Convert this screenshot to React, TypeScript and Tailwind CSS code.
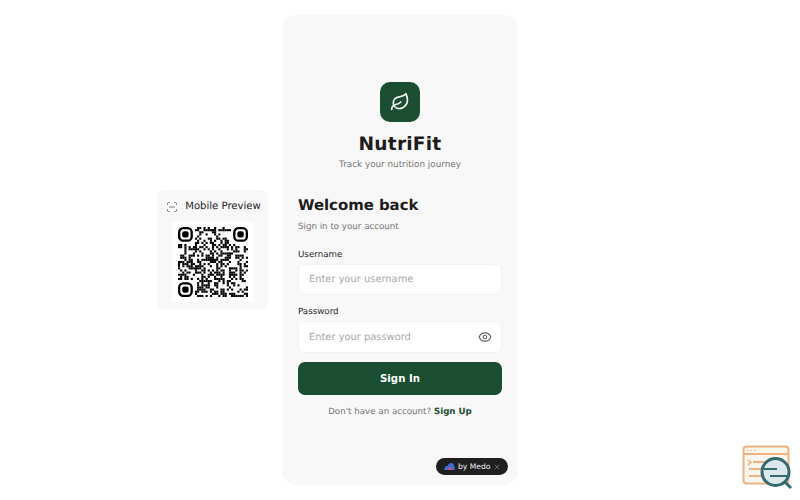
import { Eye, Leaf, ScanLine, X } from "lucide-react";

const N = 33;
const inFinder = (x: number, y: number) =>
  (x < 8 && y < 8) || (x >= N - 8 && y < 8) || (x < 8 && y >= N - 8);

function qrModules() {
  const cells: [number, number][] = [];
  let s = 12345;
  for (let y = 0; y < N; y++) {
    for (let x = 0; x < N; x++) {
      s = (s * 1103515245 + 12345) & 0x7fffffff;
      if (!inFinder(x, y) && (s >> 16) % 100 < 46) cells.push([x, y]);
    }
  }
  return cells;
}

function Finder({ x, y }: { x: number; y: number }) {
  return (
    <g>
      <rect x={x + 0.55} y={y + 0.55} width="5.9" height="5.9" rx="1.9" fill="none" stroke="#000" strokeWidth="1.1" />
      <rect x={x + 2} y={y + 2} width="3" height="3" rx="1" fill="#000" />
    </g>
  );
}

function Qr() {
  return (
    <svg viewBox={`0 0 ${N} ${N}`} className="w-[70px] h-[70px]">
      {qrModules().map(([x, y]) => (
        <rect key={`${x}-${y}`} x={x} y={y} width="1" height="1" fill="#000" />
      ))}
      <Finder x={0} y={0} />
      <Finder x={N - 7} y={0} />
      <Finder x={0} y={N - 7} />
    </svg>
  );
}

function Inspector() {
  return (
    <svg viewBox="0 0 50 44" className="w-[50px] h-[44px]" fill="none">
      <rect x="1.500" y="1.500" width="45" height="37" rx="3" fill="#fdf6ef" stroke="#f0b183" strokeWidth="2" />
      <path d="M2 9h44" stroke="#f0b183" strokeWidth="2" />
      <path d="M5 5.500h1.500M8.500 5.500H10M12 5.500h1.500" stroke="#f0b183" strokeWidth="1.2" />
      <path d="M6 15l3 2.500L6 20" stroke="#f0b183" strokeWidth="1.6" />
      <path d="M11 17h14M7 24h17M7 31h14" stroke="#f0b183" strokeWidth="1.8" />
      <circle cx="33.500" cy="27" r="13.500" fill="#dce8ec" stroke="#33696f" strokeWidth="3" />
      <path d="M22 24h13M28 31h17" stroke="#33696f" strokeWidth="2" />
      <path d="M43 37l6 6" stroke="#33696f" strokeWidth="3" />
    </svg>
  );
}

export default function App() {
  return (
    <div className="relative h-[500px] w-[800px] overflow-hidden bg-white font-['DejaVu_Sans',sans-serif] [text-rendering:geometricPrecision] grid grid-cols-[1fr_236px_1fr] items-center">
      <div className="flex justify-end pr-[14px]">
        <div className="w-[111px] h-[120px] rounded-lg bg-[#f8f8f8] flex flex-col items-center pt-[8px]">
          <div className="flex items-center gap-[7px] h-[18px] pl-[2px] text-[10.100px] text-[#222] whitespace-nowrap">
            <ScanLine size={12} strokeWidth={1.5} className="text-[#555]" />
            Mobile Preview
          </div>
          <div className="mt-[6px] w-[82px] h-[80px] bg-white flex items-center justify-center">
            <Qr />
          </div>
        </div>
      </div>

      <div className="relative h-[470px] w-[236px] rounded-[14px] bg-[#f8f8f8] px-4 pt-[67px]">
        <div className="flex flex-col items-center">
          <div className="w-10 h-10 rounded-[10px] bg-[#1a4d32] flex items-center justify-center">
            <Leaf size={20} strokeWidth={2} className="text-[#f4f4f0]" />
          </div>
          <h1 className="mt-[10px] text-[18.600px] leading-[26px] font-bold text-[#1c1c1c] tracking-[0.2px]">NutriFit</h1>
          <p className="text-[8.800px] leading-[14px] text-[#757575]">Track your nutrition journey</p>
        </div>

        <h2 className="mt-[21px] text-[14.900px] leading-[24px] font-bold text-[#1c1c1c]">Welcome back</h2>
        <p className="mt-[3px] text-[8.700px] leading-[14px] text-[#757575]">Sign in to your account</p>

        <label className="block mt-[14px] text-[8.700px] leading-[14px] text-[#2a2a2a]">Username</label>
        <div className="mt-[2px] h-[31px] rounded-[7px] bg-white border border-[#f1f1f1] flex items-center px-[10px] text-[9.900px] text-[#a8a8a8]">
          <span className="pt-[2px]">Enter your username</span>
        </div>

        <label className="block mt-[10px] text-[8.700px] leading-[14px] text-[#2a2a2a]">Password</label>
        <div className="mt-[2px] h-[32px] rounded-[7px] bg-white border border-[#f1f1f1] flex items-center justify-between pl-[10px] pr-[9px] text-[9.900px] text-[#a8a8a8]">
          <span className="pt-[2px]">Enter your password</span>
          <Eye size={14} strokeWidth={2} className="text-[#666]" />
        </div>

        <button className="mt-[9px] w-full h-[33px] rounded-[7px] bg-[#1a4d32] text-white text-[10.200px] font-bold">Sign In</button>

        <p className="mt-[10px] text-center text-[8.700px] leading-[14px] text-[#757575]">
          Don't have an account? <span className="font-bold text-[#1a4d32]">Sign Up</span>
        </p>

        <div className="absolute left-[154px] top-[443px] w-[72px] h-[17px] rounded-full bg-[#1f1f1f] flex items-center pl-[8px] gap-[3px] text-[7.600px] text-[#eee] whitespace-nowrap">
          <svg viewBox="0 0 12 8" className="w-[11px] h-[7px]">
            <path d="M0 8c0-3 1.500-4.500 3.500-4.500C4.500 1.500 6 0 8 0c2.500 0 4 3 4 8z" fill="#3b6fd4" />
            <path d="M4 8c0-2 1-3 2.500-3S9 6 9 8z" fill="#d9506a" />
          </svg>
          by Medo
          <X size={8} strokeWidth={1.5} className="text-[#aaa]" />
        </div>
      </div>

      <div />
      <div className="absolute left-[742px] top-[445px]">
        <Inspector />
      </div>
    </div>
  );
}
